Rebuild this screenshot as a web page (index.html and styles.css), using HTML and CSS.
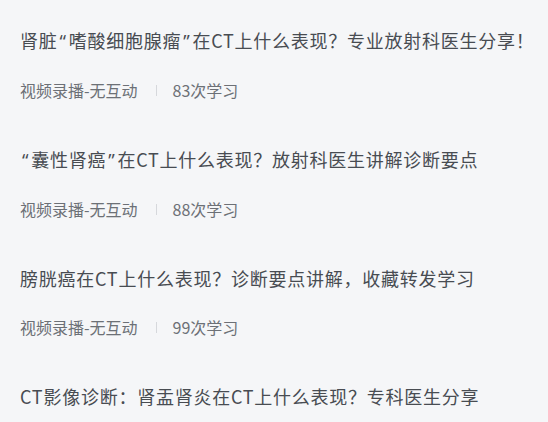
FILE: index.html
```html
<!DOCTYPE html>
<html lang="zh-CN">
<head>
<meta charset="utf-8">
<link rel="stylesheet" href="styles.css">
</head>
<body>
<ul class="course-list">
  <li class="course">
    <div class="title">肾脏<span class="q">“</span>嗜酸细胞腺瘤<span class="q">”</span>在CT上什么表现？专业放射科医生分享！</div>
    <div class="meta"><span>视频录播-无互动</span><span class="sep"></span><span>83次学习</span></div>
  </li>
  <li class="course">
    <div class="title"><span class="q">“</span>囊性肾癌<span class="q">”</span>在CT上什么表现？放射科医生讲解诊断要点</div>
    <div class="meta"><span>视频录播-无互动</span><span class="sep"></span><span>88次学习</span></div>
  </li>
  <li class="course">
    <div class="title">膀胱癌在CT上什么表现？诊断要点讲解，收藏转发学习</div>
    <div class="meta"><span>视频录播-无互动</span><span class="sep"></span><span>99次学习</span></div>
  </li>
  <li class="course">
    <div class="title">CT影像诊断：肾盂肾炎在CT上什么表现？专科医生分享</div>
  </li>
</ul>
</body>
</html>
```

FILE: styles.css
```css
html, body {
  margin: 0;
  padding: 0;
  background: #f5f6f8;
  height: 100%;
  overflow: hidden;
}
body {
  font-family: "Noto Sans CJK SC", "Noto Sans", sans-serif;
}
.course-list {
  list-style: none;
  margin: 0;
  padding: 26px 0 0 20px;
}
.course {
  margin-bottom: 44px;
}
.title {
  font-size: 18px;
  line-height: 28px;
  letter-spacing: 0.75px;
  color: #484c52;
  white-space: nowrap;
}
.q {
  font-family: "Noto Sans", sans-serif;
  padding: 0 2px;
}
.meta {
  margin-top: 24px;
  display: flex;
  align-items: center;
  font-size: 16px;
  line-height: 22px;
  color: #6c7076;
}
.sep {
  width: 1px;
  height: 11px;
  background: #d6d8dc;
  margin: 0 16px 0 18px;
}
```
